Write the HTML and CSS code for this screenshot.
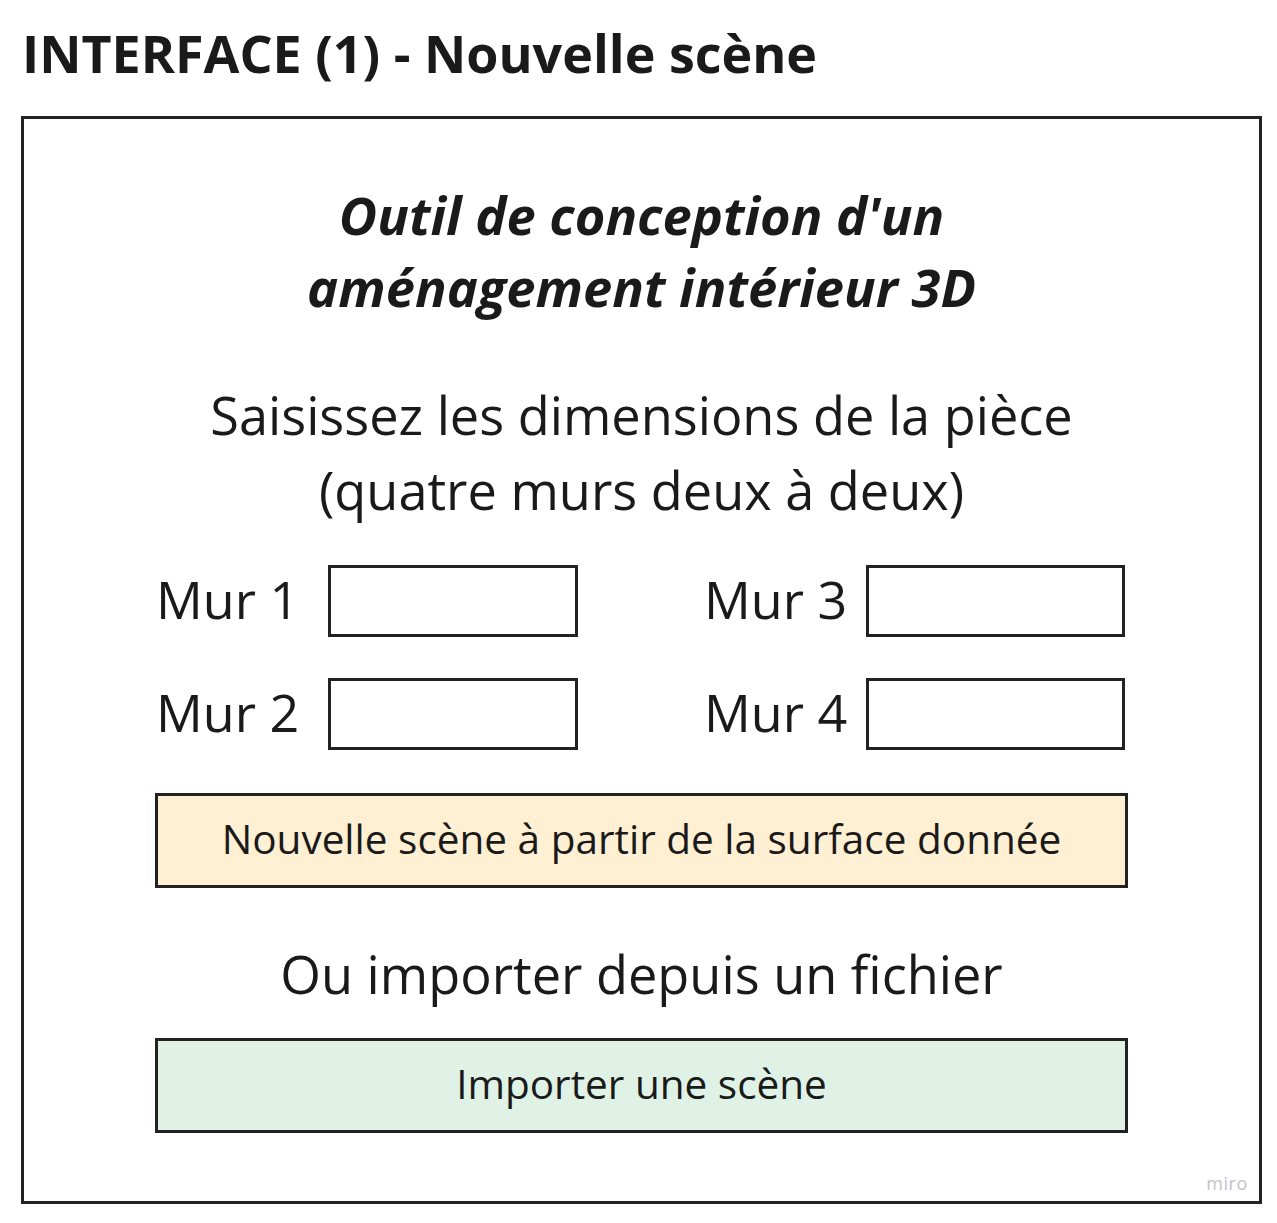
FILE: index.html
```html
<!DOCTYPE html>
<html lang="fr">
<head>
<meta charset="utf-8">
<title>INTERFACE (1) - Nouvelle scène</title>
<link rel="stylesheet" href="styles.css">
</head>
<body>
<div class="page">
  <h1 class="page-title">INTERFACE (1) - Nouvelle scène</h1>
  <div class="frame">
    <h2 class="app-title">Outil de conception d'un<br>aménagement intérieur 3D</h2>
    <p class="prompt">Saisissez les dimensions de la pièce<br>(quatre murs deux à deux)</p>
    <div class="walls">
      <div class="wall-col left">
        <div class="wall"><span class="wall-label">Mur 1</span><span class="wall-input"></span></div>
        <div class="wall"><span class="wall-label">Mur 2</span><span class="wall-input"></span></div>
      </div>
      <div class="wall-col right">
        <div class="wall"><span class="wall-label">Mur 3</span><span class="wall-input"></span></div>
        <div class="wall"><span class="wall-label">Mur 4</span><span class="wall-input"></span></div>
      </div>
    </div>
    <div class="btn btn-new">Nouvelle scène à partir de la surface donnée</div>
    <p class="or">Ou importer depuis un fichier</p>
    <div class="btn btn-import">Importer une scène</div>
    <span class="miro">miro</span>
  </div>
</div>
</body>
</html>
```
FILE: styles.css
```css
* { box-sizing: border-box; }
html, body { margin: 0; padding: 0; background: #ffffff; }
body {
  font-family: "Open Sans", "Noto Sans", sans-serif;
  color: #1a1a1a;
  width: 1277px;
  height: 1223px;
  overflow: hidden;
}
.page { padding: 0 0 0 21px; }
.page-title {
  margin: 0;
  padding: 19px 0 0 1px;
  font-size: 52px;
  font-weight: 700;
  line-height: 68px;
  height: 116px;
  color: #1a1a1a;
}
.frame {
  position: relative;
  width: 1241px;
  height: 1088px;
  border: 3px solid #222;
  display: flex;
  flex-direction: column;
  align-items: center;
  padding-top: 60px;
}
.app-title {
  margin: 0;
  font-size: 52.5px;
  font-style: italic;
  font-weight: 700;
  line-height: 72px;
  text-align: center;
}
.prompt {
  margin: 54px 0 0;
  font-size: 52.3px;
  line-height: 75px;
  text-align: center;
  font-weight: 400;
}
.walls {
  margin-top: 38px;
  width: 973px;
  display: flex;
  gap: 126px;
  padding-left: 1px;
}
.wall-col { display: flex; flex-direction: column; gap: 41px; }
.wall { display: flex; align-items: center; height: 72px; }
.wall-label { font-size: 52px; line-height: 72px; margin-top: -4px; }
.left .wall-label { width: 172px; }
.right .wall-label { width: 162px; }
.wall-input {
  display: block;
  width: 250px;
  height: 72px;
  border: 3px solid #222;
  background: #fff;
}
.right .wall-input { width: 259px; }
.btn {
  width: 973px;
  height: 95px;
  border: 3px solid #222;
  display: flex;
  align-items: center;
  justify-content: center;
  font-size: 40.5px;
  padding-bottom: 4px;
}
.btn-new { margin-top: 43px; background: #fff0d4; }
.btn-import { margin-top: 29px; background: #e0f2e6; }
.or {
  margin: 51px 0 0;
  font-size: 52.3px;
  line-height: 70px;
  text-align: center;
}
.miro {
  position: absolute;
  right: 11px;
  bottom: 6px;
  font-size: 18px;
  color: #c2c2c8;
  letter-spacing: 0.6px;
}
```
